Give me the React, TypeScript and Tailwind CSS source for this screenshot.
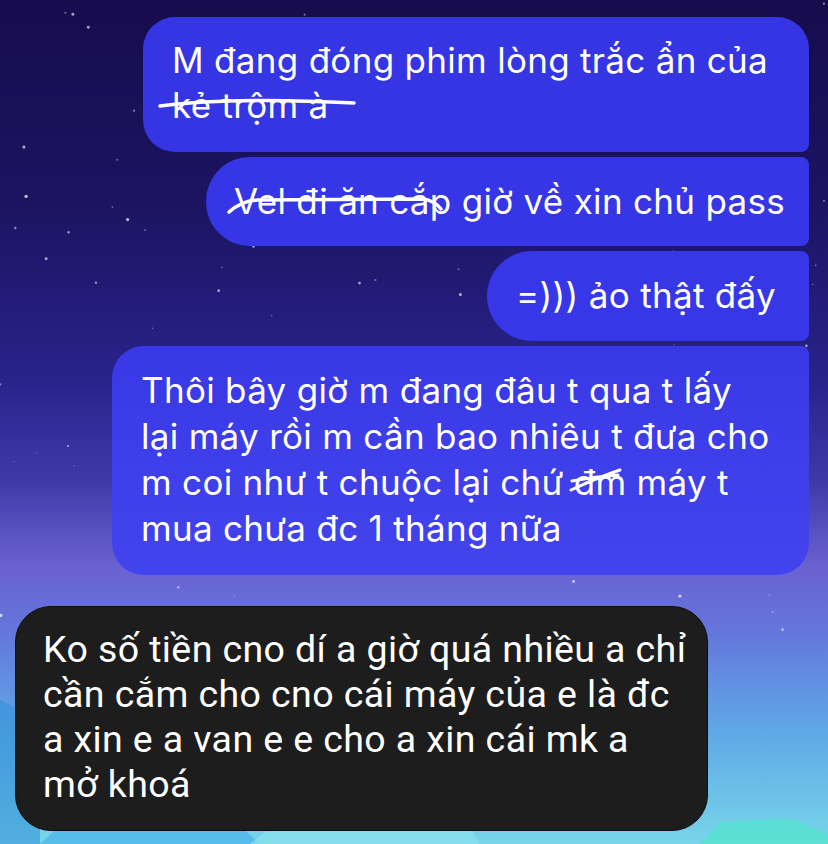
import React from 'react';

// deterministic star field for the night sky
const stars = Array.from({ length: 150 }, (_, i) => {
  const a = Math.sin(i * 12.9898) * 43758.5453;
  const b = Math.sin(i * 78.233) * 12345.6789;
  const c = Math.sin(i * 3.77) * 9876.54;
  return {
    x: (a - Math.floor(a)) * 828,
    y: (b - Math.floor(b)) * 780,
    r: 0.6 + (c - Math.floor(c)) * 1.1,
    o: 0.2 + (c - Math.floor(c)) * 0.55,
  };
});

function Blue({ children, className }: { children: React.ReactNode; className: string }) {
  return (
    <div
      className={`whitespace-nowrap text-white text-[35px] tracking-[0.3px] ${className}`}
      style={{ fontFamily: 'Inter, "Noto Sans", sans-serif' }}
    >
      {children}
    </div>
  );
}

export default function App() {
  return (
    <div className="relative h-[844px] w-[828px] overflow-hidden bg-[linear-gradient(180deg,#170c4c_0%,#1c1463_25%,#28238b_45%,#3d3aa8_57%,#6a61d0_67%,#6477dc_75%,#5fa9e6_87%,#78d5ea_100%)]">
      <svg className="pointer-events-none absolute inset-0 h-full w-full" viewBox="0 0 828 844">
        {stars.map((s, i) => (
          <circle key={i} cx={s.x} cy={s.y} r={s.r} fill="white" opacity={s.o} />
        ))}
        <polygon points="0,844 0,700 40,720 40,844" fill="#2f8fd6" opacity="0.55" />
        <polygon points="40,844 60,826 240,826 260,844" fill="#48b4ea" opacity="0.7" />
        <polygon points="250,844 270,828 470,826 480,844" fill="#8ae3ee" opacity="0.7" />
        <polygon points="700,844 720,822 790,818 828,834 828,844" fill="#55e2cf" opacity="0.8" />
      </svg>

      <div className="relative flex flex-col items-end gap-[5px] pt-[17px] pr-[19px]">
        <Blue className="w-[666px] rounded-[32px] rounded-br-[8px] bg-[#3535e4] pl-[29px] pt-[21px] pb-[24px] leading-[45px]">
          <div>M đang đóng phim lòng trắc ẩn của</div>
          <div>
            <span className="relative inline-block">
              kẻ trộm à
              <svg className="pointer-events-none absolute -left-[14px] top-[13px] h-[14px] w-[200px]" viewBox="0 0 200 14">
                <path d="M2 10 C 50 4, 120 3, 196 7" fill="none" stroke="white" strokeWidth="3.5" strokeLinecap="round" />
              </svg>
            </span>
          </div>
        </Blue>
        <Blue className="w-[603px] rounded-l-[44px] rounded-r-[8px] bg-[#3636e6] pl-[22px] pt-[22px] pb-[22px] leading-[45px]">
          <span className="relative inline-block pl-[6px]">
            Vel đi ăn cắp
            <svg className="pointer-events-none absolute -left-[1px] top-[16px] h-[20px] w-[218px]" viewBox="0 0 218 20">
              <path d="M2 17 C 10 10, 18 6, 30 5 L 196 4 C 204 5, 210 9, 214 14" fill="none" stroke="white" strokeWidth="3.5" strokeLinecap="round" />
            </svg>
          </span>{' '}
          giờ về xin chủ pass
        </Blue>
        <Blue className="w-[322px] rounded-l-[45px] rounded-r-[8px] bg-[#3737e8] pl-[29px] pt-[22px] pb-[23px] leading-[45px]">
          =))) ảo thật đấy
        </Blue>
        <Blue className="w-[697px] rounded-[32px] rounded-tr-[8px] bg-[linear-gradient(180deg,#3838e6,#4444ee)] pl-[29px] pt-[21px] pb-[24px] leading-[46px]">
          <div>Thôi bây giờ m đang đâu t qua t lấy</div>
          <div>lại máy rồi m cần bao nhiêu t đưa cho</div>
          <div>
            m coi như t chuộc lại chứ{' '}
            <span className="relative inline-block">
              đm
              <svg className="pointer-events-none absolute -left-[6px] top-[8px] h-[26px] w-[58px]" viewBox="0 0 58 26">
                <path d="M3 23 C 18 16, 34 9, 52 3 M4 14 C 20 11, 36 9, 50 8" fill="none" stroke="white" strokeWidth="3" strokeLinecap="round" />
              </svg>
            </span>{' '}
            máy t
          </div>
          <div>mua chưa đc 1 tháng nữa</div>
        </Blue>
      </div>

      <div
        className="relative ml-[15px] mt-[31px] w-[693px] rounded-[36px] border border-[#0c0c0c] bg-[#1d1d1d] pl-[27px] pt-[20px] pb-[23px] text-[37.5px] leading-[45px] tracking-[0.4px] text-white whitespace-nowrap"
        style={{ fontFamily: 'Roboto, "Liberation Sans", sans-serif' }}
      >
        <div>Ko số tiền cno dí a giờ quá nhiều a chỉ</div>
        <div>cần cắm cho cno cái máy của e là đc</div>
        <div>a xin e a van e e cho a xin cái mk a</div>
        <div>mở khoá</div>
      </div>
    </div>
  );
}
